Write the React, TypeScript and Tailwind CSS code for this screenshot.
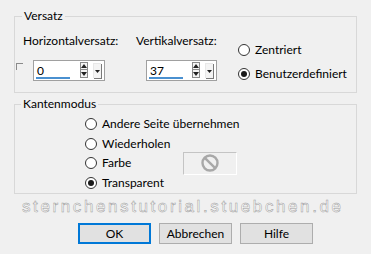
import React from "react";

function Radio({ checked, label }: { checked?: boolean; label: string }) {
  return (
    <div className="flex items-center h-[16px]">
      <span className="w-[12px] h-[12px] rounded-full border border-[#333333] bg-white flex items-center justify-center shrink-0">
        {checked && <span className="w-[6px] h-[6px] rounded-full bg-[#1a1a1a]" />}
      </span>
      <span className="ml-[5px] leading-[16px] whitespace-nowrap">{label}</span>
    </div>
  );
}

function SpinInput({ value, width }: { value: string; width: number }) {
  return (
    <div
      className="relative h-[21px] border border-[#a0a0a0] bg-white flex items-center"
      style={{ width }}
    >
      <span className="ml-[3px] leading-[16px]">{value}</span>
      <span className="absolute left-[2px] bottom-[1px] w-[34px] h-[2px] bg-[#4a90d0]" />
      <div className="absolute right-[16px] top-[1px] w-[8px] h-[16px] border border-[#8a8a8a] bg-[#f4f4f4] flex flex-col items-center justify-around">
        <svg width="6" height="4" viewBox="0 0 6 4"><path d="M0 4 L3 0 L6 4 Z" fill="#222" /></svg>
        <span className="w-full h-px bg-[#8a8a8a]" />
        <svg width="6" height="4" viewBox="0 0 6 4"><path d="M0 0 L3 4 L6 0 Z" fill="#222" /></svg>
      </div>
      <div className="absolute right-[3px] top-[2px] w-[8px] h-[15px] bg-[#f4f4f4] border-l border-t border-[#e8e8e8] shadow-[1px_1px_0_#7a7a7a] flex items-center justify-center">
        <svg width="5" height="3" viewBox="0 0 5 3"><path d="M0 0 L2.5 3 L5 0 Z" fill="#222" /></svg>
      </div>
    </div>
  );
}

export default function App() {
  return (
    <div
      className="w-[371px] h-[254px] bg-[#f0f0f0] text-black text-[12px] overflow-hidden pt-[8px]"
      style={{ fontFamily: 'Lato, "Noto Sans", sans-serif' }}
    >
      <fieldset className="mx-[14px] border border-[#d8d8d8] pl-[1px] pb-[10px]">
        <legend className="ml-[6px] px-[2px] leading-[16px]">Versatz</legend>
        <div className="flex items-start">
          <div className="flex flex-col w-[120px]">
            <span className="ml-[7px] mt-[9px] leading-[16px] whitespace-nowrap">Horizontalversatz:</span>
            <div className="flex items-start mt-[11px]">
              <span className="mt-[3px] w-[7px] h-[7px] border-l border-t border-[#8a8a8a]" />
              <div className="ml-[10px]">
                <SpinInput value="0" width={72} />
              </div>
            </div>
          </div>
          <div className="flex flex-col w-[102px]">
            <span className="mt-[9px] leading-[16px] whitespace-nowrap">Vertikalversatz:</span>
            <div className="mt-[11px] ml-[10px]">
              <SpinInput value="37" width={71} />
            </div>
          </div>
          <div className="flex flex-col gap-[8px] mt-[18px]">
            <Radio label="Zentriert" />
            <Radio checked label="Benutzerdefiniert" />
          </div>
        </div>
      </fieldset>

      <fieldset className="mx-[14px] mt-[3px] border border-[#d8d8d8] pb-[2px]">
        <legend className="ml-[6px] px-[2px] leading-[16px]">Kantenmodus</legend>
        <div className="ml-[70px] mt-[4px] flex flex-col">
          <Radio label="Andere Seite übernehmen" />
          <div className="mt-[4px]">
            <Radio label="Wiederholen" />
          </div>
          <div className="mt-[3px] flex items-center h-[16px]">
            <div className="w-[98px]">
              <Radio label="Farbe" />
            </div>
            <div className="my-[-4px] w-[54px] h-[23px] border border-t-[#c4c4c4] border-l-[#c4c4c4] border-r-white border-b-white bg-[#f0f0f0] flex items-center justify-center">
              <svg width="18" height="18" viewBox="0 0 18 18">
                <circle cx="9" cy="9" r="7.5" fill="none" stroke="#a8a8a8" strokeWidth="2.4" />
                <path d="M3.8 3.8 L14.2 14.2" stroke="#a8a8a8" strokeWidth="2.4" />
              </svg>
            </div>
          </div>
          <div className="mt-[4px]">
            <Radio checked label="Transparent" />
          </div>
        </div>
      </fieldset>

      <div
        className="mt-[4px] ml-[22px] h-[17px] leading-[17px] text-[17px] tracking-[2.6px] text-white whitespace-nowrap [-webkit-text-stroke:0.5px_#9a9a9a]"
        style={{ fontFamily: '"Liberation Sans", Arial, sans-serif' }}
      >
        sternchenstutorial.stuebchen.de
      </div>

      <div className="mt-[8px] ml-[78px] flex gap-[8px]">
        <button className="w-[73px] h-[21px] border-2 border-[#0078d7] bg-[#e1e1e1] leading-[16px]">OK</button>
        <button className="w-[73px] h-[21px] border border-[#adadad] bg-[#e1e1e1] leading-[16px]">Abbrechen</button>
        <button className="w-[73px] h-[21px] border border-[#adadad] bg-[#e1e1e1] leading-[16px]">Hilfe</button>
      </div>
    </div>
  );
}
